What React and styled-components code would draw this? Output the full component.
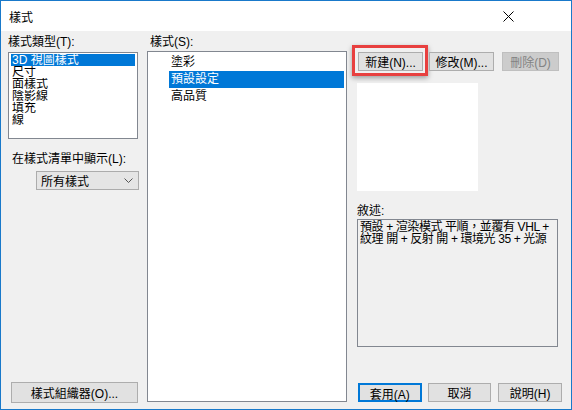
import React from 'react'
import styled, { createGlobalStyle } from 'styled-components'

const Global = createGlobalStyle`
  html, body { margin: 0; padding: 0; background: #f0f0f0; }
  body {
    font-family: "Liberation Sans", "Noto Sans CJK TC", sans-serif;
    font-size: 12px;
    color: #000;
  }
`

const Window = styled.div`
  width: 572px;
  height: 410px;
  box-sizing: border-box;
  border: 1px solid #1979ca;
  display: flex;
  flex-direction: column;
  background: #f0f0f0;
`

const TitleBar = styled.div`
  height: 30px;
  background: #fff;
  display: flex;
  align-items: center;
  justify-content: space-between;
  padding: 0 57px 0 8px;
  font-size: 12px;
`

const Body = styled.div`
  flex: 1;
  display: grid;
  grid-template-columns: 130px 200px 206px;
  column-gap: 9px;
  padding: 4px 0 6px 7px;
  min-height: 0;
`

const Column = styled.div`
  display: flex;
  flex-direction: column;
  min-height: 0;
  margin-left: ${(p) => p.$shift || 0}px;
`

const Label = styled.div`
  height: 14px;
  line-height: 14px;
  white-space: nowrap;
  margin-top: ${(p) => p.$top || 0}px;
  margin-left: ${(p) => p.$left || 0}px;
`

const ListBox = styled.div`
  box-sizing: border-box;
  background: #fff;
  border: 1px solid #828790;
  margin-top: ${(p) => p.$top || 3}px;
  height: ${(p) => (p.$height ? p.$height + 'px' : 'auto')};
  flex: ${(p) => (p.$grow ? 1 : 'none')};
  margin-bottom: ${(p) => p.$bottom || 0}px;
  padding: ${(p) => p.$pad || '0 1px'};
`

const Item = styled.div`
  height: ${(p) => p.$h}px;
  line-height: ${(p) => p.$h}px;
  margin-left: ${(p) => p.$offset || 0}px;
  padding-left: ${(p) => p.$indent || 1}px;
  background: ${(p) => (p.$selected ? '#0078d7' : 'transparent')};
  color: ${(p) => (p.$selected ? '#fff' : '#000')};
  white-space: nowrap;
  overflow: hidden;
`

const Select = styled.div`
  box-sizing: border-box;
  margin: 5px 0 0 28px;
  width: 103px;
  height: 19px;
  border: 1px solid #acacac;
  background: #e5e5e5;
  display: flex;
  align-items: center;
  justify-content: space-between;
  padding: 0 5px 0 4px;
`

const Button = styled.button`
  box-sizing: border-box;
  width: ${(p) => p.$w}px;
  height: 19px;
  padding: 0;
  font: inherit;
  color: ${(p) => (p.$disabled ? '#838383' : '#000')};
  background: ${(p) => (p.$disabled ? '#cccccc' : '#e1e1e1')};
  border: ${(p) => (p.$default ? '2px solid #0078d7' : p.$disabled ? '1px solid #bfbfbf' : '1px solid #adadad')};
  white-space: nowrap;
  position: relative;
`

const BottomButton = styled(Button)`
  margin-top: auto;
  margin-left: 3px;
  height: 21px;
`

const ButtonRow = styled.div`
  display: flex;
  gap: ${(p) => p.$gap || 6}px;
  margin-top: ${(p) => p.$top || 0}px;
  margin-left: 1px;
`

const Highlight = styled.span`
  position: absolute;
  left: -7px;
  top: -8px;
  right: -6px;
  bottom: -6px;
  border: 3px solid #e8403f;
  box-shadow: 0 2px 5px rgba(0, 0, 0, 0.35);
  pointer-events: none;
`

const Preview = styled.div`
  width: 121px;
  height: 108px;
  background: #fff;
  margin-top: 12px;
`

const Description = styled.div`
  box-sizing: border-box;
  width: 201px;
  height: 128px;
  margin-top: 1px;
  border: 1px solid #828790;
  background: #f0f0f0;
  padding: 1px 2px;
  line-height: 12px;
  letter-spacing: -0.4px;
  white-space: nowrap;
  overflow: hidden;
`

const Chevron = () => (
  <svg width="9" height="5" viewBox="0 0 9 5">
    <path d="M0.5 0.5 L4.5 4.5 L8.5 0.5" fill="none" stroke="#555" strokeWidth="1" />
  </svg>
)

const CloseIcon = () => (
  <svg width="11" height="11" viewBox="0 0 11 11">
    <path d="M0.5 0.5 L10.5 10.5 M10.5 0.5 L0.5 10.5" stroke="#000" strokeWidth="1" />
  </svg>
)

export default function App() {
  const types = ['3D 視圖樣式', '尺寸', '面樣式', '陰影線', '填充', '線']
  const styles = ['塗彩', '預設設定', '高品質']
  return (
    <>
      <Global />
      <Window>
        <TitleBar>
          <span>樣式</span>
          <CloseIcon />
        </TitleBar>
        <Body>
          <Column>
            <Label>樣式類型(T):</Label>
            <ListBox $height={87} $pad="1px 2px">
              {types.map((t, i) => (
                <Item key={t} $h={12} $selected={i === 0}>{t}</Item>
              ))}
            </ListBox>
            <Label $top={13} $left={4}>在樣式清單中顯示(L):</Label>
            <Select>
              <span>所有樣式</span>
              <Chevron />
            </Select>
            <BottomButton $w={127}>樣式組織器(O)...</BottomButton>
          </Column>
          <Column>
            <Label $left={3}>樣式(S):</Label>
            <ListBox $grow $top={2} $bottom={1} $pad="2px 2px">
              {styles.map((s, i) => (
                <Item key={s} $h={17} $offset={19} $indent={2} $selected={i === 1}>
                  {s}
                </Item>
              ))}
            </ListBox>
          </Column>
          <Column $shift={1}>
            <ButtonRow $top={17} $gap={6}>
              <Button $w={65}>
                新建(N)...
                <Highlight />
              </Button>
              <Button $w={65}>修改(M)...</Button>
              <Button $w={57} $disabled style={{ marginLeft: 2 }}>刪除(D)</Button>
            </ButtonRow>
            <Preview />
            <Label $top={13}>敘述:</Label>
            <Description>
              預設 + 渲染模式 平順，並覆有 VHL +<br />
              紋理 開 + 反射 開 + 環境光 35 + 光源
            </Description>
            <ButtonRow style={{ marginTop: 'auto', marginBottom: 1 }} $gap={6}>
              <Button $w={65} $default>套用(A)</Button>
              <Button $w={65}>取消</Button>
              <Button $w={65} style={{ marginLeft: 1 }}>說明(H)</Button>
            </ButtonRow>
          </Column>
        </Body>
      </Window>
    </>
  )
}
